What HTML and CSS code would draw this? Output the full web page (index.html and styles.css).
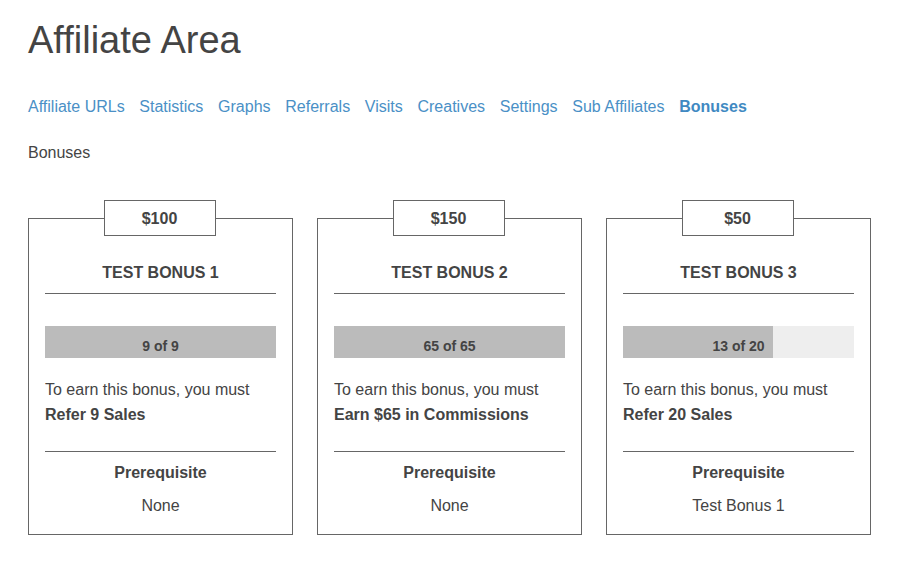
FILE: index.html
```html
<!DOCTYPE html>
<html lang="en">
<head>
  <meta charset="UTF-8">
  <title>Affiliate Area</title>
  <link rel="stylesheet" href="styles.css">
</head>
<body>
  <div class="page">
    <h1 class="page-title">Affiliate Area</h1>

    <nav class="tabs">
      <a href="#">Affiliate URLs</a>
      <a href="#">Statistics</a>
      <a href="#">Graphs</a>
      <a href="#">Referrals</a>
      <a href="#">Visits</a>
      <a href="#">Creatives</a>
      <a href="#">Settings</a>
      <a href="#">Sub Affiliates</a>
      <a href="#" class="active">Bonuses</a>
    </nav>

    <h3 class="section-title">Bonuses</h3>

    <div class="bonus-grid">
      <div class="bonus">
        <div class="bonus-amount">$100</div>
        <div class="bonus-name">TEST BONUS 1</div>
        <div class="progress">
          <div class="progress-fill" style="width: 100%"></div>
          <span class="progress-text">9 of 9</span>
        </div>
        <div class="bonus-req">
          To earn this bonus, you must<br>
          <strong>Refer 9 Sales</strong>
        </div>
        <div class="bonus-prereq">
          <div class="prereq-label">Prerequisite</div>
          <div class="prereq-value">None</div>
        </div>
      </div>

      <div class="bonus">
        <div class="bonus-amount">$150</div>
        <div class="bonus-name">TEST BONUS 2</div>
        <div class="progress">
          <div class="progress-fill" style="width: 100%"></div>
          <span class="progress-text">65 of 65</span>
        </div>
        <div class="bonus-req">
          To earn this bonus, you must<br>
          <strong>Earn $65 in Commissions</strong>
        </div>
        <div class="bonus-prereq">
          <div class="prereq-label">Prerequisite</div>
          <div class="prereq-value">None</div>
        </div>
      </div>

      <div class="bonus">
        <div class="bonus-amount">$50</div>
        <div class="bonus-name">TEST BONUS 3</div>
        <div class="progress">
          <div class="progress-fill" style="width: 65%"></div>
          <span class="progress-text">13 of 20</span>
        </div>
        <div class="bonus-req">
          To earn this bonus, you must<br>
          <strong>Refer 20 Sales</strong>
        </div>
        <div class="bonus-prereq">
          <div class="prereq-label">Prerequisite</div>
          <div class="prereq-value">Test Bonus 1</div>
        </div>
      </div>
    </div>
  </div>
</body>
</html>
```

FILE: styles.css
```css
body {
  margin: 0;
  font-family: 'Liberation Sans', Arial, sans-serif;
  font-size: 16px;
  color: #444;
  background: #fff;
}

.page {
  width: 843px;
  padding: 19px 0 0 28px;
}

.page-title {
  margin: 0;
  font-size: 38px;
  font-weight: normal;
  line-height: 43px;
  color: #444;
}

.tabs {
  margin-top: 33px;
  line-height: 24px;
}

.tabs a {
  color: #4a90c6;
  text-decoration: none;
  margin-right: 10.25px;
}

.tabs a.active {
  font-weight: bold;
  color: #3f89c2;
}

.section-title {
  margin: 22px 0 0;
  font-size: 16px;
  font-weight: normal;
  line-height: 24px;
}

.bonus-grid {
  display: grid;
  grid-template-columns: repeat(3, 265px);
  gap: 24px;
  margin-top: 53px;
}

.bonus {
  position: relative;
  border: 1px solid #666;
  padding: 0 16px 16px;
  text-align: center;
}

.bonus-amount {
  position: absolute;
  top: -19px;
  left: 50%;
  transform: translateX(-50%);
  margin-left: -1px;
  box-sizing: border-box;
  width: 112px;
  height: 36px;
  padding-top: 2px;
  line-height: 32px;
  border: 1px solid #666;
  background: #fff;
  font-weight: bold;
}

.bonus-name {
  padding: 42px 0 8px;
  line-height: 24px;
  font-weight: bold;
  border-bottom: 1px solid #666;
}

.progress {
  position: relative;
  height: 32px;
  margin-top: 32px;
  background: #eee;
}

.progress-fill {
  height: 100%;
  background: #bbb;
}

.progress-text {
  position: absolute;
  left: 0;
  right: 0;
  top: 6px;
  line-height: 28px;
  font-size: 14px;
  font-weight: bold;
}

.bonus-req {
  margin-top: 19px;
  padding-bottom: 24px;
  line-height: 25px;
  text-align: left;
  border-bottom: 1px solid #666;
}

.bonus-prereq {
  padding-top: 9px;
  line-height: 24px;
}

.prereq-label {
  font-weight: bold;
}

.prereq-value {
  margin-top: 9px;
}
```
